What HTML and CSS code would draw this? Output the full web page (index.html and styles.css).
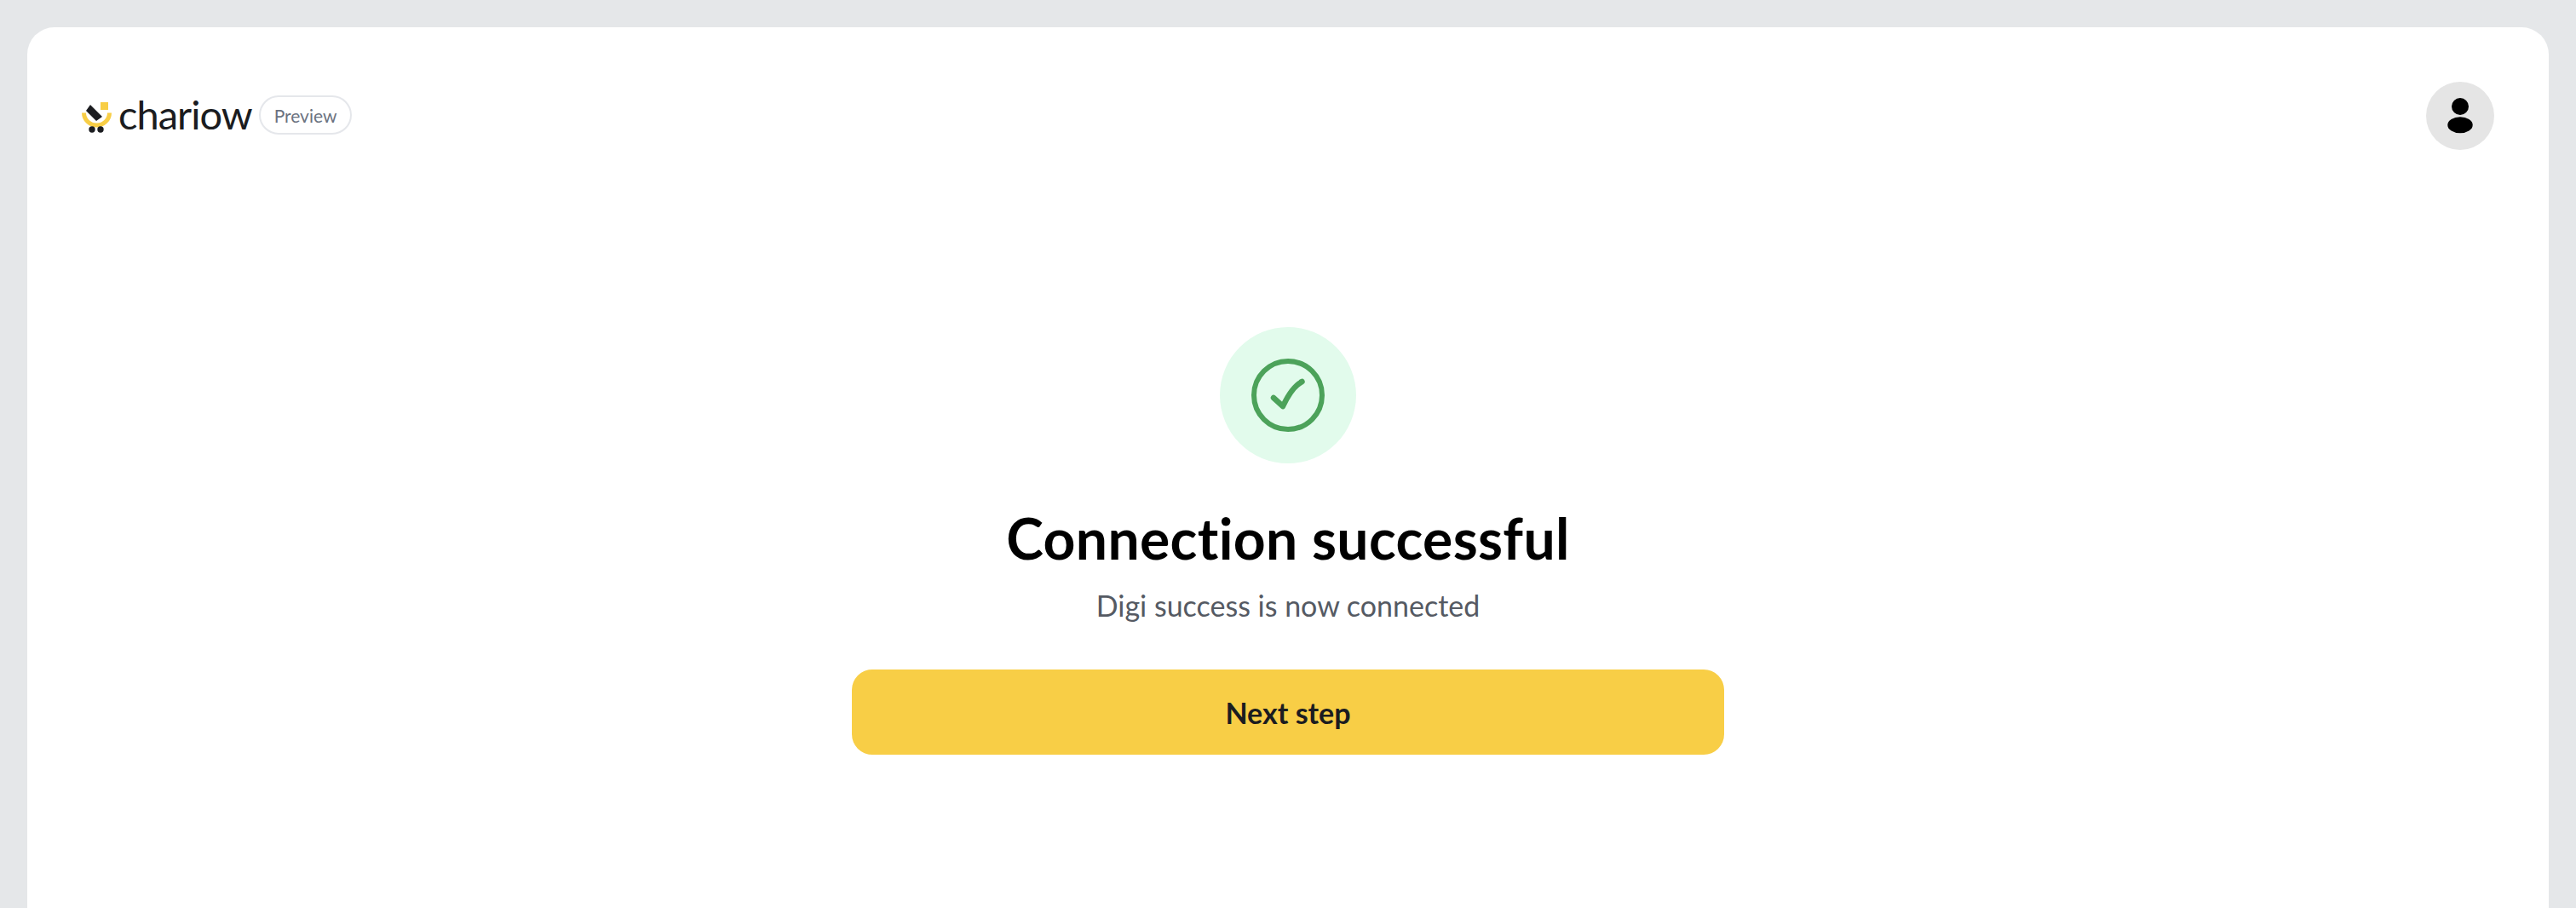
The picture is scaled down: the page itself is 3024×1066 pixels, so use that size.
FILE: index.html
```html
<!DOCTYPE html>
<html lang="en">
<head>
  <meta charset="UTF-8">
  <title>Chariow - Connection successful</title>
  <link rel="stylesheet" href="styles.css">
</head>
<body>
	<div class="card">
		<div class="top">
			<div class="brand">
				<svg class="logo" width="35" height="36" viewBox="0 0 35 36">
					<path d="M2.500 12.500 A15 14.500 0 0 0 32.500 12.500" fill="none" stroke="#f8ce46" stroke-width="5"/>
					<rect x="22" y="0" width="9" height="9" fill="#f8ce46"/>
					<path d="M10 3 L24 17 L17 22 L5 10 Z" fill="#1b1c20"/>
					<circle cx="12" cy="32" r="3.700" fill="#1b1c20"/>
					<circle cx="22" cy="32" r="3.700" fill="#1b1c20"/>
				</svg>
				<span class="word">chariow</span>
				<span class="tag">Preview</span>
			</div>
			<div class="avatar">
				<svg width="32" height="44" viewBox="0 0 32 44">
					<circle cx="16" cy="11" r="10" fill="#000"/>
					<ellipse cx="16" cy="32.700" rx="14.700" ry="9.500" fill="#000"/>
				</svg>
			</div>
		</div>
		<div class="result">
			<div class="ok-circle">
				<svg width="88" height="88" viewBox="0 0 88 88">
					<circle cx="44" cy="44" r="40" fill="none" stroke="#4ca25a" stroke-width="6"/>
					<path d="M27 47 L38 57 C44 44 51 33 60.500 28" fill="none" stroke="#4ca25a" stroke-width="6.500" stroke-linecap="round" stroke-linejoin="round"/>
				</svg>
			</div>
			<h1>Connection successful</h1>
			<p>Digi success is now connected</p>
			<button type="button" class="next">Next step</button>
		</div>
	</div>
</body>
</html>
```

FILE: styles.css
```css
html, body{ height: 100%; }
body{
	margin: 0;
	padding: 32px 32px 0;
	box-sizing: border-box;
	background: #e5e7e9;
	overflow: hidden;
	font-family: "Lato", "Liberation Sans", sans-serif;
	font-variant-ligatures: none;
}
.card{
	height: 100%;
	background: #fff;
	border-radius: 32px 32px 0 0;
	padding: 64px 64px 0;
	box-sizing: border-box;
}
.top{
	display: flex;
	justify-content: space-between;
	align-items: center;
}
.brand{
	display: flex;
	align-items: center;
}
.logo{ margin-top: 4px; }
.word{
	margin: 0 0 4px 8px;
	font-size: 47px;
	line-height: 60px;
	letter-spacing: -1px;
	color: #1b1c20;
}
.tag{
	margin: 0 0 2px 8px;
	height: 42px;
	padding: 0 16px;
	display: flex;
	align-items: center;
	border: 2px solid #e5e7eb;
	border-radius: 24px;
	font-size: 21px;
	color: #6b7280;
}
.avatar{
	width: 80px;
	height: 80px;
	border-radius: 50%;
	background: #e5e5e5;
	display: flex;
	align-items: center;
	justify-content: center;
}
.result{
	margin-top: 208px;
	display: flex;
	flex-direction: column;
	align-items: center;
}
.ok-circle{
	width: 160px;
	height: 160px;
	border-radius: 50%;
	background: #e2fbec;
	display: flex;
	align-items: center;
	justify-content: center;
}
h1{
	margin: 52px 0 0;
	font-size: 66px;
	line-height: 72px;
	font-weight: 700;
	letter-spacing: 0.35px;
	color: #000;
}
p{
	margin: 19px 0 0;
	font-size: 34px;
	line-height: 48px;
	color: #555a63;
}
.next{
	margin-top: 51px;
	width: 1024px;
	height: 100px;
	border: none;
	border-radius: 24px;
	background: #f8ce46;
	font-family: inherit;
	font-variant-ligatures: none;
	font-size: 34px;
	font-weight: 700;
	color: #1b1c20;
	cursor: pointer;
}
```
